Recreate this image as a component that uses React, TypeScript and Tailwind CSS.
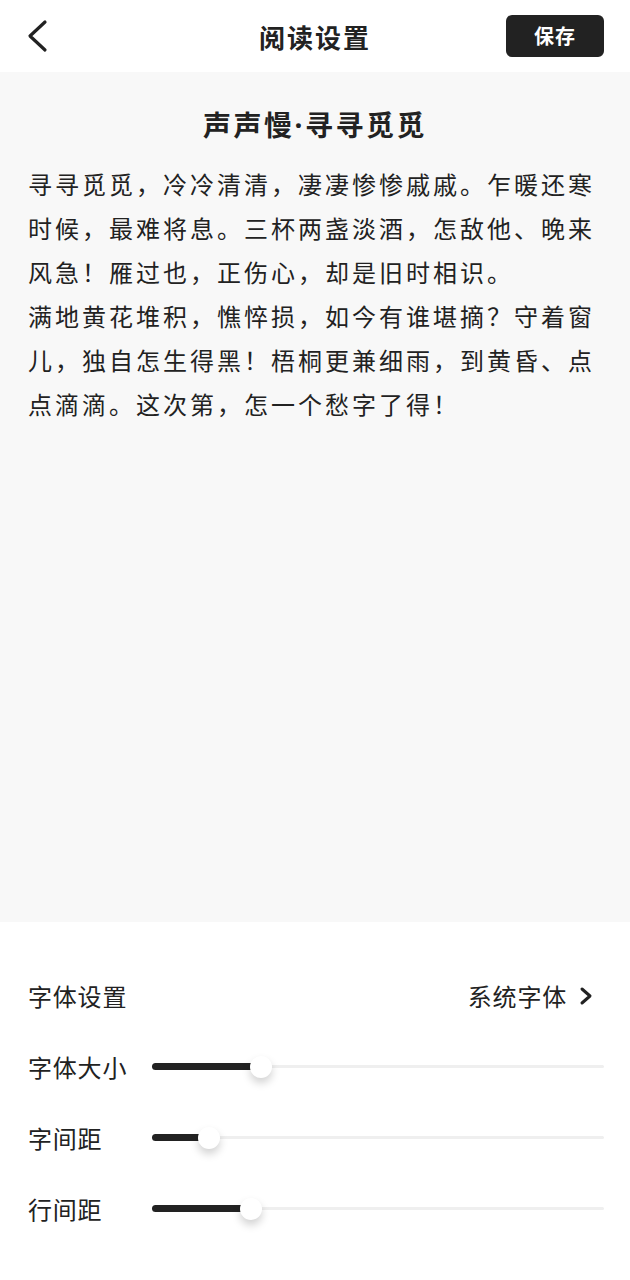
import { useState } from 'react';

const FONT = { fontFamily: '"Noto Sans CJK SC", "Noto Sans", sans-serif' };

function Slider({ value }: { value: number }) {
  return (
    <div className="relative flex-1 h-[30px] flex items-center -mr-[2px]">
      <div className="h-[3px] w-full bg-[#efefef] rounded-full" />
      <div
        className="absolute left-0 h-[7px] bg-[#222222] rounded-full"
        style={{ width: `${value}%` }}
      />
      <div
        className="absolute w-[22px] h-[22px] -ml-[11px] rounded-full bg-white shadow-[0_5px_8px_rgba(0,0,0,0.18)]"
        style={{ left: `${value}%` }}
      />
    </div>
  );
}

export default function App() {
  const [sizes] = useState({ font: 24.2, letter: 12.5, line: 22 });

  return (
    <div className="w-[630px] h-[1280px] flex flex-col bg-white text-[#222]" style={FONT}>
      <header className="h-[72px] shrink-0 flex items-center justify-between px-[24px] relative">
        <svg width="24" height="34" viewBox="0 0 24 34" className="ml-[2px]">
          <path d="M19 3 L4 17 L19 31" fill="none" stroke="#222" strokeWidth="3.2" strokeLinecap="round" strokeLinejoin="round" />
        </svg>
        <h1 className="absolute left-1/2 -translate-x-1/2 text-[26px] font-bold tracking-[2px]">阅读设置</h1>
        <button className="w-[98px] h-[42px] rounded-[6px] bg-[#222] text-white text-[20px] font-bold mr-[2px] tracking-[1px]">
          保存
        </button>
      </header>

      <main className="flex-1 bg-[#f8f8f8] px-[28px] pt-[32px]">
        <h2 className="text-center text-[28px] font-bold tracking-[2.5px] leading-[40px]">
          声声慢<span style={{ fontFamily: '"Noto Sans", sans-serif' }}>·</span>寻寻觅觅
        </h2>
        <div className="mt-[17px] text-[24px] leading-[44px] tracking-[3px] text-[#222]">
          <p>寻寻觅觅，冷冷清清，凄凄惨惨戚戚。乍暖还寒时候，最难将息。三杯两盏淡酒，怎敌他、晚来风急！雁过也，正伤心，却是旧时相识。</p>
          <p>满地黄花堆积，憔悴损，如今有谁堪摘？守着窗儿，独自怎生得黑！梧桐更兼细雨，到黄昏、点点滴滴。这次第，怎一个愁字了得！</p>
        </div>
      </main>

      <section className="h-[358px] shrink-0 bg-white px-[28px] pt-[38px] text-[24px] tracking-[0.8px] text-[#222]">
        <div className="h-[71px] flex items-center justify-between">
          <span>字体设置</span>
          <span className="flex items-center gap-[12px]">
            系统字体
            <svg width="14" height="20" viewBox="0 0 14 20" className="mr-[9px]">
              <path d="M3 3 L11 10 L3 17" fill="none" stroke="#222" strokeWidth="3" strokeLinecap="round" strokeLinejoin="round" />
            </svg>
          </span>
        </div>
        <div className="h-[71px] flex items-center">
          <span className="w-[124px]">字体大小</span>
          <Slider value={sizes.font} />
        </div>
        <div className="h-[71px] flex items-center">
          <span className="w-[124px]">字间距</span>
          <Slider value={sizes.letter} />
        </div>
        <div className="h-[71px] flex items-center">
          <span className="w-[124px]">行间距</span>
          <Slider value={sizes.line} />
        </div>
      </section>
    </div>
  );
}
